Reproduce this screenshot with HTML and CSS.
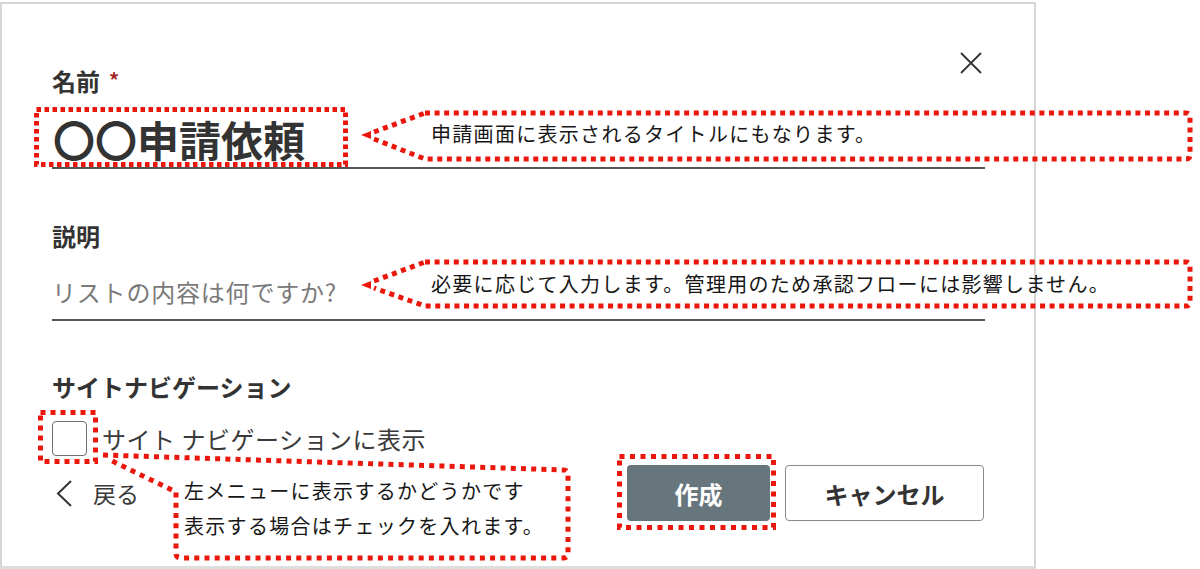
FILE: index.html
```html
<!DOCTYPE html>
<html lang="ja">
<head>
<meta charset="utf-8">
<link rel="stylesheet" href="styles.css">
</head>
<body>
<div class="panel">
  <div class="field-head">
    <div class="label">名前<span class="req">*</span></div>
    <button class="close" aria-label="閉じる">
      <svg width="24" height="22" viewBox="0 0 24 22"><path d="M2 1 L22 21 M22 1 L2 21" stroke="#333" stroke-width="1.8" fill="none"/></svg>
    </button>
  </div>
  <div class="title-input">〇〇申請依頼</div>
  <div class="label desc-label">説明</div>
  <div class="desc-input">リストの内容は何ですか?</div>
  <div class="label nav-label">サイトナビゲーション</div>
  <div class="check-row">
    <span class="checkbox"></span>
    <span class="check-text">サイト ナビゲーションに表示</span>
  </div>
  <div class="bottom-row">
    <div class="back">
      <svg width="18" height="27" viewBox="0 0 18 27"><path d="M16 1 L3 13.5 L16 26" stroke="#333" stroke-width="2" fill="none"/></svg>
      <span>戻る</span>
    </div>
    <div class="buttons">
      <button class="btn primary">作成</button>
      <button class="btn secondary">キャンセル</button>
    </div>
  </div>
</div>

<svg class="annot" width="1200" height="569" viewBox="0 0 1200 569">
  <g fill="none" stroke="#ec170c" stroke-width="5">
    <rect x="36.5" y="109.5" width="309" height="55" stroke-dasharray="4.5 3.5"/>
    <rect x="40.5" y="412.5" width="55" height="49" stroke-dasharray="5 5"/>
    <rect x="619.5" y="456.5" width="154" height="71" stroke-dasharray="5 5.5"/>
    <path d="M425 113 H1186 Q1190 113 1190 118 V155 Q1190 159 1186 159 H425 L374 139 M374 132 L425 113" stroke-dasharray="5 4.6"/>
    <path d="M425 262 H1186 Q1190 262 1190 267 V302 Q1190 306 1186 306 H425 L374 288 M374 281 L425 262" stroke-dasharray="5 4.6"/>
    <path d="M103 455 L564 470 Q568 470 568 475 V553 Q568 558 563 558 H181 Q176 558 176 553 V492 L108 459" stroke-dasharray="5 5.2"/>
  </g>
  <g fill="#ec170c">
    <polygon points="361,135 371,131 371,139"/>
    <polygon points="361,285 371,281 371,289"/>
  </g>
</svg>

<div class="callout c1">申請画面に表示されるタイトルにもなります。</div>
<div class="callout c2">必要に応じて入力します。管理用のため承認フローには影響しません。</div>
<div class="callout c3">左メニューに表示するかどうかです<br>表示する場合はチェックを入れます。</div>
</body>
</html>
```

FILE: styles.css
```css
* { box-sizing: border-box; }

html, body {
  margin: 0;
  padding: 0;
  background: #ffffff;
}

body {
  position: relative;
  width: 1200px;
  height: 569px;
  overflow: hidden;
  font-family: "Noto Sans CJK JP", "Noto Sans", sans-serif;
  color: #333333;
}

.panel {
  margin-top: 2px;
  width: 1036px;
  height: 567px;
  border: 2px solid #d6d6d6;
  border-bottom: 3px solid #dedede;
  padding: 61px 49px 0 50px;
  display: flex;
  flex-direction: column;
}

.field-head {
  display: flex;
  justify-content: space-between;
  align-items: flex-start;
}

.label {
  font-size: 24px;
  line-height: 32px;
  font-weight: 700;
  color: #333333;
}

.req {
  color: #a4262c;
  font-size: 20px;
  margin-left: 9px;
  position: relative;
  top: -3px;
}

.close {
  margin: -13px 2px 0 0;
  padding: 0;
  border: 0;
  background: none;
  width: 24px;
  height: 22px;
  display: flex;
}

.title-input {
  margin-top: 16px;
  font-size: 42px;
  line-height: 48px;
  font-weight: 700;
  color: #333333;
  padding: 0 0 4px 1px;
  border-bottom: 2px solid #555555;
}

.desc-label {
  margin-top: 51px;
}

.desc-input {
  margin-top: 23px;
  font-size: 24px;
  line-height: 34px;
  letter-spacing: 0.8px;
  color: #7a7a7a;
  padding-bottom: 10px;
  border-bottom: 2px solid #555555;
}

.nav-label {
  margin-top: 50px;
}

.check-row {
  margin-top: 18px;
  display: flex;
  align-items: center;
  gap: 15px;
  height: 35px;
}

.checkbox {
  width: 35px;
  height: 35px;
  border: 1.5px solid #707070;
  border-radius: 4px;
  background: #fff;
}

.check-text {
  font-size: 24px;
  line-height: 32px;
  letter-spacing: 0.5px;
  color: #3a3a3a;
}

.bottom-row {
  margin-top: 9px;
  display: flex;
  justify-content: space-between;
  align-items: center;
}

.back {
  display: flex;
  align-items: center;
  gap: 20px;
  padding-left: 3px;
  font-size: 23px;
  color: #3a3a3a;
}

.buttons {
  display: flex;
  gap: 15px;
  margin-right: 1px;
}

.btn {
  height: 56px;
  border-radius: 4px;
  font-family: "Noto Sans CJK JP", "Noto Sans", sans-serif;
  font-size: 24px;
  font-weight: 700;
  padding: 0;
}

.primary {
  width: 143px;
  background: #67757c;
  border: 0;
  color: #ffffff;
}

.secondary {
  width: 199px;
  background: #ffffff;
  border: 1.5px solid #8a8a8a;
  color: #333333;
}

.annot {
  position: absolute;
  left: 0;
  top: 0;
  pointer-events: none;
}

.callout {
  position: absolute;
  font-size: 20px;
  letter-spacing: 1.3px;
  color: #161616;
  white-space: nowrap;
}

.c1 {
  left: 425px;
  top: 110px;
  height: 46px;
  padding-left: 6px;
  display: flex;
  align-items: center;
}

.c2 {
  left: 425px;
  top: 261px;
  height: 44px;
  padding-left: 6px;
  display: flex;
  align-items: center;
}

.c3 {
  left: 184px;
  top: 473px;
  line-height: 35px;
}
```
